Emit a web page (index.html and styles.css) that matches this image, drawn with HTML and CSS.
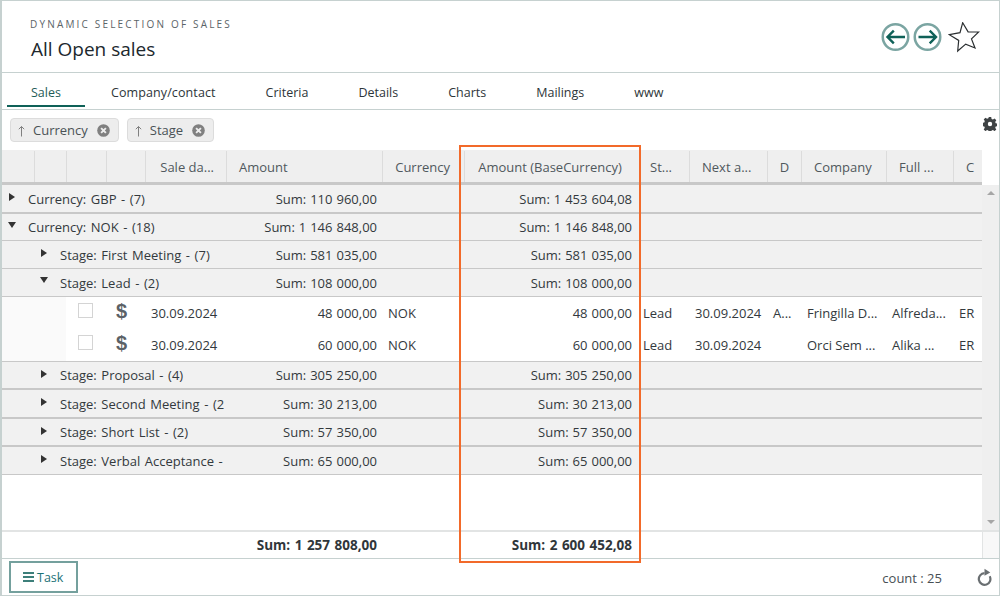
FILE: index.html
```html
<!DOCTYPE html>
<html lang="en">
<head>
    <meta charset="UTF-8">
    <title>All Open sales</title>
    <link rel="stylesheet" href="styles.css">
</head>
<body>
<div class="app">
    <header class="top">
        <div>
            <div class="eyebrow">DYNAMIC SELECTION OF SALES</div>
            <h1>All Open sales</h1>
        </div>
        <div class="top-actions">
            <svg width="29" height="29" viewBox="0 0 29 29"><circle cx="14.500" cy="14" r="12.750" class="nav-ring"/><path d="M24 14H6.500M12.800 7.700L6.500 14l6.300 6.300" class="nav-arrow"/></svg>
            <svg width="29" height="29" viewBox="0 0 29 29"><circle cx="14.500" cy="14" r="12.750" class="nav-ring"/><path d="M5.500 14H23M16.700 7.700L23 14l-6.300 6.300" class="nav-arrow"/></svg>
            <svg class="star" width="32" height="32" viewBox="0 0 32 32"><path d="M14.700 .7l5.400 9.200 10.600.1-7.200 6.900 3.500 9.100-9.300-3.900-8 6.900 1-10.600-9.400-5.700 10.700-2z"/></svg>
        </div>
    </header>

    <nav class="tabs">
        <a class="tab tab-active">Sales</a>
        <a class="tab tab-company">Company/contact</a>
        <a class="tab">Criteria</a>
        <a class="tab">Details</a>
        <a class="tab">Charts</a>
        <a class="tab">Mailings</a>
        <a class="tab">www</a>
    </nav>

    <div class="groupbar">
        <span class="chip"><svg class="chip-arrow" width="15" height="12" viewBox="0 0 15 12"><path d="M3.500 11.500V1.500M.8 4.200l2.700-2.700 2.700 2.700"/></svg>Currency<span class="chip-x"><svg width="13" height="13" viewBox="0 0 13 13"><circle cx="6.500" cy="6.500" r="6.300"/><path d="M4.100 4.100l4.800 4.800M8.900 4.100l-4.800 4.800"/></svg></span></span>
        <span class="chip"><svg class="chip-arrow" width="15" height="12" viewBox="0 0 15 12"><path d="M3.500 11.500V1.500M.8 4.200l2.700-2.700 2.700 2.700"/></svg>Stage<span class="chip-x"><svg width="13" height="13" viewBox="0 0 13 13"><circle cx="6.500" cy="6.500" r="6.300"/><path d="M4.100 4.100l4.800 4.800M8.900 4.100l-4.800 4.800"/></svg></span></span>
        <svg class="gear" width="14" height="14" viewBox="0 0 14 14"><path d="M5.800 0h2.400l.4 2 1.300.6 1.700-1.100 1.700 1.700-1.100 1.700.5 1.300 2 .4v2.400l-2 .4-.5 1.300 1.100 1.700-1.700 1.700-1.700-1.100-1.300.5-.4 2H5.800l-.4-2-1.300-.5-1.700 1.100-1.700-1.700 1.100-1.700-.5-1.300-2-.4V5.800l2-.4.5-1.300-1.100-1.700 1.700-1.700 1.700 1.100 1.300-.6zM7 4.800a2.200 2.200 0 1 0 0 4.400 2.200 2.200 0 0 0 0-4.400z" fill-rule="evenodd"/></svg>
    </div>

    <div class="grid-wrap">
        <div class="grid-head cols">
            <div class="hcell"></div>
            <div class="hcell"></div>
            <div class="hcell"></div>
            <div class="hcell"></div>
            <div class="hcell hcell-date">Sale da...</div>
            <div class="hcell">Amount</div>
            <div class="hcell hcell-right">Currency</div>
            <div class="hcell hcell-base">Amount (BaseCurrency)</div>
            <div class="hcell hcell-st">St...</div>
            <div class="hcell">Next a...</div>
            <div class="hcell hcell-d">D</div>
            <div class="hcell">Company</div>
            <div class="hcell">Full ...</div>
            <div class="hcell hcell-c">C</div>
        </div>

        <div class="grid-main">
            <div class="grid-rows">
                <div class="group cols level-0 thick r29"><span class="caret caret-right"></span><span class="group-label">Currency: GBP - (7)</span><span class="sum">Sum: 110 960,00</span><span class="sum-base">Sum: 1 453 604,08</span></div>
                <div class="group cols level-0 r27"><span class="caret caret-down"></span><span class="group-label">Currency: NOK - (18)</span><span class="sum">Sum: 1 146 848,00</span><span class="sum-base">Sum: 1 146 848,00</span></div>
                <div class="group cols level-1"><span class="caret caret-right"></span><span class="group-label">Stage: First Meeting - (7)</span><span class="sum">Sum: 581 035,00</span><span class="sum-base">Sum: 581 035,00</span></div>
                <div class="group cols level-1"><span class="caret caret-down"></span><span class="group-label">Stage: Lead - (2)</span><span class="sum">Sum: 108 000,00</span><span class="sum-base">Sum: 108 000,00</span></div>

                <div class="details">
                    <div class="data cols">
                        <span class="indent"></span><span class="check-cell"><i class="check"></i></span><span class="dollar">$</span><span class="cell">30.09.2024</span><span class="cell-num">48 000,00</span><span class="cell">NOK</span><span class="cell-num cell-base">48 000,00</span><span class="cell cell-tight">Lead</span><span class="cell">30.09.2024</span><span class="cell">A...</span><span class="cell">Fringilla D...</span><span class="cell">Alfreda...</span><span class="cell">ER</span>
                    </div>
                    <div class="data cols">
                        <span class="indent"></span><span class="check-cell"><i class="check"></i></span><span class="dollar">$</span><span class="cell">30.09.2024</span><span class="cell-num">60 000,00</span><span class="cell">NOK</span><span class="cell-num cell-base">60 000,00</span><span class="cell cell-tight">Lead</span><span class="cell">30.09.2024</span><span class="cell"></span><span class="cell">Orci Sem ...</span><span class="cell">Alika ...</span><span class="cell">ER</span>
                    </div>
                </div>

                <div class="group cols level-1 thick"><span class="caret caret-right"></span><span class="group-label">Stage: Proposal - (4)</span><span class="sum">Sum: 305 250,00</span><span class="sum-base">Sum: 305 250,00</span></div>
                <div class="group cols level-1 thick r29"><span class="caret caret-right"></span><span class="group-label">Stage: Second Meeting - (2</span><span class="sum">Sum: 30 213,00</span><span class="sum-base">Sum: 30 213,00</span></div>
                <div class="group cols level-1 thick"><span class="caret caret-right"></span><span class="group-label">Stage: Short List - (2)</span><span class="sum">Sum: 57 350,00</span><span class="sum-base">Sum: 57 350,00</span></div>
                <div class="group cols level-1"><span class="caret caret-right"></span><span class="group-label">Stage: Verbal Acceptance -</span><span class="sum">Sum: 65 000,00</span><span class="sum-base">Sum: 65 000,00</span></div>
            </div>
            <div class="scrollbar">
                <span class="scroll-up"></span>
                <span class="scroll-down"></span>
            </div>
        </div>

        <div class="grid-foot">
            <div class="cols foot-cols">
                <span class="sum foot-sum">Sum: 1 257 808,00</span>
                <span class="sum-base foot-sum">Sum: 2 600 452,08</span>
            </div>
            <div class="foot-corner"></div>
        </div>
    </div>

    <footer class="bottom">
        <button class="task-btn"><span class="burger"><i></i><i></i><i></i></span><span class="task-label">Task</span></button>
        <div class="bottom-right">
            <span class="count">count : 25</span>
            <svg width="16" height="18" viewBox="0 0 16 18"><path d="M7.500 5.200A5.800 5.800 0 1 0 12.700 8.200" class="refresh"/><path d="M7.500 .8l5.800 3.600-5.800 3.400z" class="refresh-head"/></svg>
        </div>
    </footer>

    <div class="highlight"></div>
</div>
</body>
</html>
```

FILE: styles.css
```css
* {
    box-sizing: border-box;
}
html, body {
    margin: 0;
    padding: 0;
}
body {
    font-family: "Open Sans", "Noto Sans", sans-serif;
    font-size: 13px;
    color: #33393d;
    background: #fff;
}
.app {
    position: relative;
    width: 1000px;
    height: 596px;
    border: 1px solid #c6d1d0;
    border-left-width: 2px;
    display: flex;
    flex-direction: column;
    overflow: hidden;
}

/* header */
.top {
    height: 72px;
    flex: none;
    display: flex;
    justify-content: space-between;
    padding: 16px 19px 0 28px;
    border-bottom: 1px solid #c6d1d0;
}
.eyebrow {
    font-size: 10px;
    letter-spacing: 2.18px;
    color: #5b6468;
    line-height: 14px;
}
h1 {
    margin: 5px 0 0 1px;
    font-size: 19px;
    font-weight: 400;
    line-height: 26px;
    color: #20282d;
}
.top-actions {
    display: flex;
    gap: 3px;
    align-items: flex-start;
    padding-top: 6px;
}
.nav-ring {
    fill: #fff;
    stroke: #7ba5a2;
    stroke-width: 2.500;
}
.nav-arrow {
    fill: none;
    stroke: #0f6158;
    stroke-width: 2.400;
}
.star {
    margin: -1px 0 0 3.500px;
}
.star path {
    fill: #fff;
    stroke: #2b2f31;
    stroke-width: 1.200;
}

/* tabs */
.tabs {
    height: 37px;
    flex: none;
    display: flex;
    gap: 50px;
    border-bottom: 1px solid #c6d1d0;
}
.tab {
    height: 34px;
    padding-top: 11px;
    line-height: 18px;
    font-size: 12.500px;
    color: #2d3539;
}
.tab-active {
    width: 78px;
    margin-left: 5px;
    padding-left: 24px;
    color: #1f5c58;
    border-bottom: 2px solid #0f6158;
}
.tab-company {
    margin-left: -24px;
    letter-spacing: .1px;
}

/* group chips */
.groupbar {
    height: 40px;
    flex: none;
    display: flex;
    align-items: flex-start;
    gap: 8px;
    padding: 8px 0 0 8px;
    position: relative;
}
.chip {
    height: 24px;
    display: flex;
    align-items: center;
    padding: 0 8px 0 7px;
    background: #ededed;
    border: 1px solid #dcdcdc;
    border-radius: 4px;
    color: #4a5256;
}
.chip-arrow {
    flex: none;
    margin-top: 1px;
}
.chip-arrow path {
    fill: none;
    stroke: #808080;
    stroke-width: 1;
}
.chip-x {
    margin-left: 9px;
    display: flex;
}
.chip-x circle {
    fill: #808080;
}
.chip-x path {
    stroke: #ededed;
    stroke-width: 1.900;
}
.gear {
    position: absolute;
    right: 2px;
    top: 7px;
    fill: #3f4345;
}

/* grid */
.cols {
    display: grid;
    grid-template-columns: 33px 32px 40px 39px 81px 156px 82px 175px 50px 78px 34px 85px 67px 28px;
}
.grid-wrap {
    flex: 1;
    display: flex;
    flex-direction: column;
    min-height: 0;
}
.grid-head {
    height: 35px;
    flex: none;
    padding-top: 1px;
    background: #efefef;
    border-bottom: 3px solid #c8c8c8;
    margin-right: 17px;
}
.hcell {
    line-height: 33px;
    padding-left: 12px;
    border-right: 1px solid #dcdcdc;
    white-space: nowrap;
    overflow: hidden;
    color: #50585d;
}
.hcell-date { text-align: right; padding-right: 12px; }
.hcell-right { text-align: right; padding-right: 14px; }
.hcell-base { text-align: center; padding: 0 4px 0 0; }
.hcell-st { padding-left: 10px; }
.hcell-d { padding-left: 0; text-align: center; }
.hcell-c { border-right: 0; }

.grid-main {
    height: 345px;
    flex: none;
    display: flex;
}
.grid-rows {
    width: 980px;
    flex: none;
}
.group {
    height: 28px;
    background: #f1f1f1;
    border-bottom: 1px solid #c8c8c8;
    position: relative;
    line-height: 28px;
    white-space: nowrap;
}
.thick {
    border-bottom-width: 2px;
    line-height: 26px;
}
.r29 {
    height: 29px;
    line-height: 28px;
}
.r27 {
    height: 27px;
    line-height: 26px;
}
.group-label {
    grid-column: 1 / 6;
    overflow: hidden;
    word-spacing: 1.200px;
}
.level-0 .group-label { padding-left: 26px; }
.level-1 .group-label { padding-left: 58px; }
.sum {
    grid-column: 6;
    text-align: right;
    padding-right: 6px;
    word-spacing: .6px;
}
.sum-base {
    grid-column: 8;
    text-align: right;
    padding-right: 8px;
    word-spacing: .6px;
}
.caret {
    position: absolute;
    width: 0;
    height: 0;
    top: 8px;
}
.caret-right {
    border-left: 6px solid #333;
    border-top: 4px solid transparent;
    border-bottom: 4px solid transparent;
}
.caret-down {
    border-top: 6px solid #333;
    border-left: 4px solid transparent;
    border-right: 4px solid transparent;
}
.level-0 .caret-right { left: 7px; }
.level-0 .caret-down { left: 6px; }
.level-1 .caret-right { left: 39px; }
.level-1 .caret-down { left: 38px; }

.details {
    height: 65px;
    border-bottom: 1px solid #c8c8c8;
    background: linear-gradient(to right, #fafafa 64px, #fff 64px);
}
.data {
    height: 32px;
    line-height: 32px;
    white-space: nowrap;
}
.indent {
    grid-column: 1 / 3;
}
.check-cell {
    display: flex;
    padding: 6px 0 0 11px;
}
.check {
    display: block;
    width: 15px;
    height: 15px;
    border: 1px solid #d4d4d4;
    background: #fff;
}
.dollar {
    font-family: "Liberation Sans", sans-serif;
    font-weight: 700;
    font-size: 20px;
    line-height: 29px;
    color: #5b6166;
    padding-left: 9px;
}
.cell {
    padding-left: 5px;
    overflow: hidden;
}
.cell-tight {
    padding-left: 3px;
}
.cell-num {
    text-align: right;
    padding-right: 6px;
    word-spacing: .6px;
}
.cell-base {
    padding-right: 8px;
}
.scrollbar {
    width: 17px;
    background: #efefef;
    position: relative;
}
.scroll-up, .scroll-down {
    position: absolute;
    left: 5px;
    border-left: 4px solid transparent;
    border-right: 4px solid transparent;
}
.scroll-up {
    top: 6px;
    border-bottom: 4px solid #a6a6a6;
}
.scroll-down {
    bottom: 6px;
    border-top: 4px solid #a6a6a6;
}

.grid-foot {
    height: 29px;
    flex: none;
    display: flex;
    border-top: 2px solid #e2e4e4;
}
.foot-cols {
    width: 980px;
    flex: none;
    line-height: 27px;
}
.foot-sum {
    font-size: 13.500px;
    font-weight: 700;
    word-spacing: 1px;
    color: #30363a;
}
.foot-corner {
    flex: 1;
    background: #f8f8f8;
    border-left: 1px solid #e2e4e4;
}

/* footer */
.bottom {
    height: 37px;
    flex: none;
    display: flex;
    justify-content: space-between;
    align-items: center;
    padding: 0 6px 0 7px;
    border-top: 1px solid #c6d1d0;
}
.task-btn {
    width: 69px;
    height: 32px;
    padding: 0 0 0 12px;
    display: flex;
    align-items: center;
    gap: 3px;
    background: #fff;
    border: 2px solid #74a09d;
    color: #1b7277;
    font: inherit;
}
.task-label {
    font-size: 12.500px;
    padding-top: 1px;
}
.burger {
    display: flex;
    flex-direction: column;
    gap: 2px;
    width: 11px;
}
.burger i {
    display: block;
    height: 2px;
    background: #3d7f7a;
}
.bottom-right {
    display: flex;
    align-items: center;
    gap: 35px;
}
.count {
    padding-top: 1px;
    color: #484f54;
}
.refresh {
    fill: none;
    stroke: #6a6f72;
    stroke-width: 2.200;
}
.refresh-head {
    fill: #6a6f72;
}

/* orange marker drawn on top of the grid */
.highlight {
    position: absolute;
    left: 457px;
    top: 144px;
    width: 182px;
    height: 418px;
    border: 2px solid #f26a2a;
    pointer-events: none;
}
```
